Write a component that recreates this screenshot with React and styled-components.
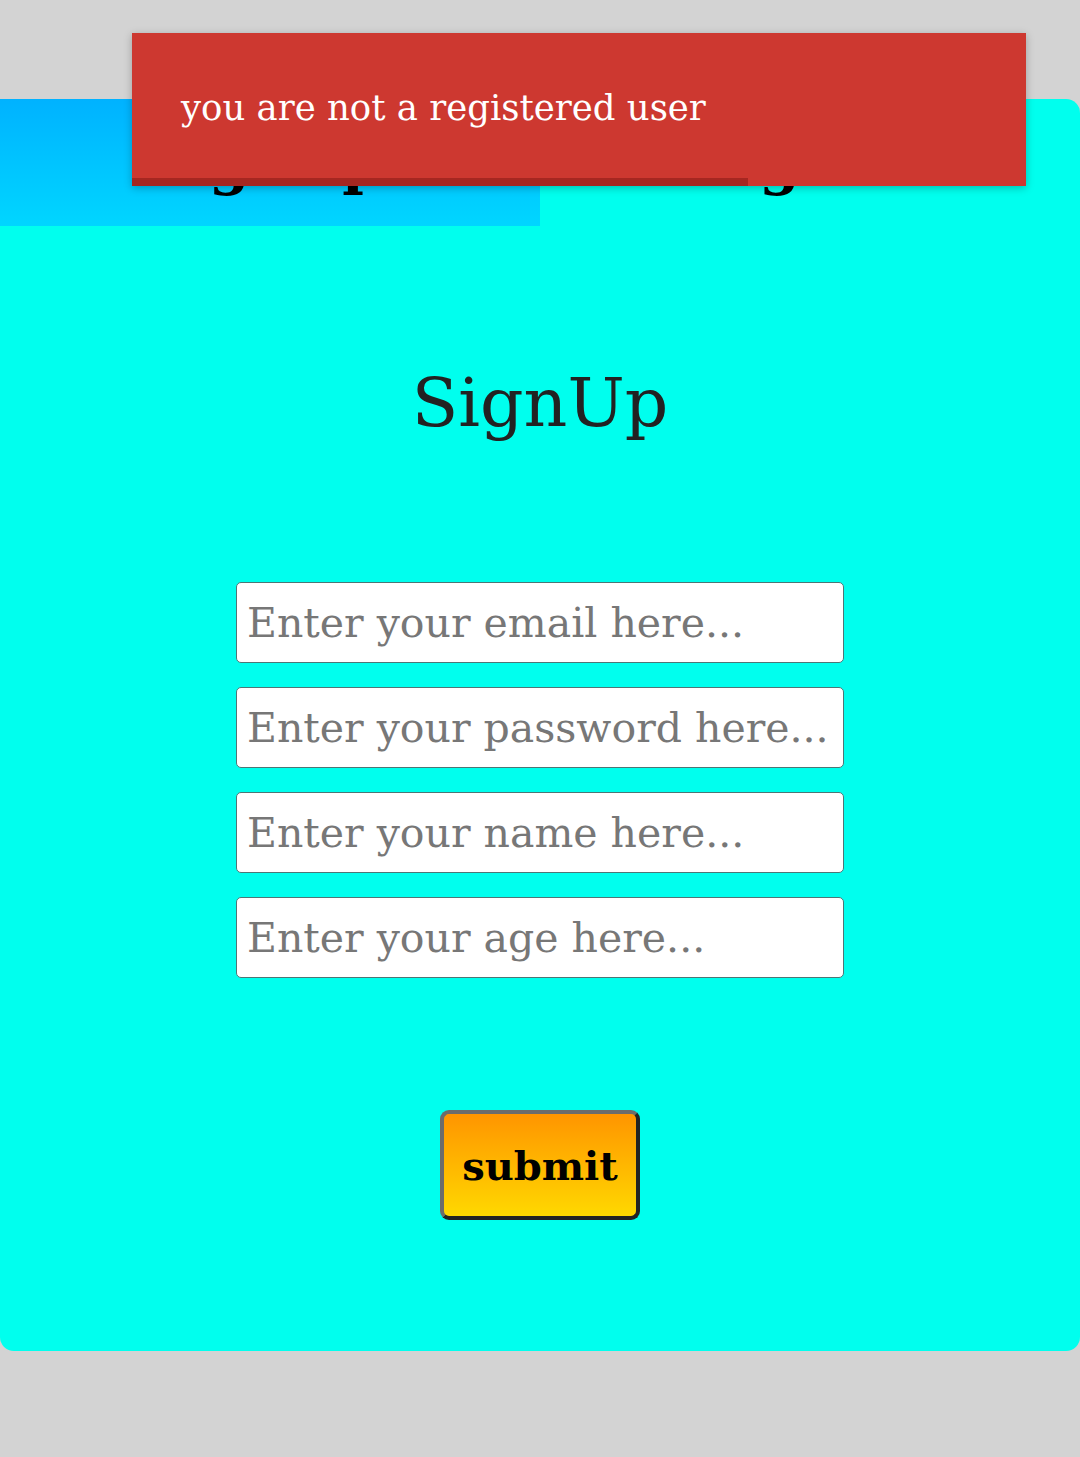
import React from 'react';
import styled, { createGlobalStyle } from 'styled-components';

const GlobalStyle = createGlobalStyle`
  html, body {
    margin: 0;
    padding: 0;
    background: #d3d3d3;
    font-family: 'DejaVu Serif', 'Liberation Serif', serif;
  }
`;

const Page = styled.div`
  padding-top: 99px;
  min-height: 1457px;
  box-sizing: border-box;
`;

const Card = styled.div`
  background: #00ffee;
  border-radius: 14px;
  height: 1252px;
  display: flex;
  flex-direction: column;
  align-items: center;
`;

const Tabs = styled.div`
  display: flex;
  width: 100%;
  height: 127px;
`;

const Tab = styled.button`
  flex: 0 0 50%;
  box-sizing: border-box;
  border: none;
  margin: 0;
  padding: 0 ${(p) => (p.$active ? '12px' : '76px')} 0 0;
  font-family: inherit;
  font-size: 58px;
  font-weight: bold;
  color: #000;
  background: ${(p) => (p.$active ? 'linear-gradient(#00b2ff, #00d6ff)' : 'transparent')};
  border-top-right-radius: ${(p) => (p.$active ? '0' : '12px')};
`;

const Title = styled.h1`
  margin: 132px 0 0;
  font-size: 68px;
  font-weight: normal;
  color: #222222;
  line-height: 90px;
`;

const Form = styled.form`
  display: flex;
  flex-direction: column;
  align-items: center;
  margin-top: 134px;
`;

const Fields = styled.div`
  display: flex;
  flex-direction: column;
  gap: 24px;
`;

const Input = styled.input`
  width: 608px;
  height: 81px;
  box-sizing: border-box;
  border: 1px solid #4d7676;
  border-radius: 5px;
  padding: 0 10px;
  font-family: inherit;
  font-size: 41px;
  color: #222;
  background: #fff;

  &::placeholder {
    color: #777777;
  }
`;

const SubmitButton = styled.button`
  margin-top: 132px;
  width: 200px;
  height: 110px;
  box-sizing: border-box;
  border: 4px solid;
  border-color: #6c6c6c #232323 #232323 #6c6c6c;
  border-radius: 9px;
  background: linear-gradient(#ff9500, #ffd800);
  font-family: inherit;
  font-size: 40px;
  font-weight: bold;
  color: #000;
  cursor: pointer;
`;

const Toast = styled.div`
  position: absolute;
  top: 33px;
  left: 132px;
  width: 894px;
  height: 153px;
  background: #cd3830;
  box-shadow: 0 2px 8px rgba(0, 0, 0, 0.25);
  color: #fff;
  display: flex;
  align-items: center;
  padding-left: 49px;
  box-sizing: border-box;
  font-size: 35.5px;
  overflow: hidden;
`;

const ToastText = styled.span`
  margin-top: -4px;
`;

const Progress = styled.div`
  position: absolute;
  left: 0;
  bottom: 0;
  height: 8px;
  background: rgba(120, 20, 15, 0.45);
`;

export default function App() {
  const remaining = 0.689;
  return (
    <Page>
      <GlobalStyle />
      <Card>
        <Tabs>
          <Tab $active type="button">SignUp</Tab>
          <Tab type="button">Login</Tab>
        </Tabs>
        <Title>SignUp</Title>
        <Form onSubmit={(e) => e.preventDefault()}>
          <Fields>
            <Input type="email" placeholder="Enter your email here..." />
            <Input type="password" placeholder="Enter your password here..." />
            <Input type="text" placeholder="Enter your name here..." />
            <Input type="number" placeholder="Enter your age here..." />
          </Fields>
          <SubmitButton type="submit">submit</SubmitButton>
        </Form>
      </Card>
      <Toast>
        <ToastText>you are not a registered user</ToastText>
        <Progress style={{ width: `${remaining * 100}%` }} />
      </Toast>
    </Page>
  );
}
